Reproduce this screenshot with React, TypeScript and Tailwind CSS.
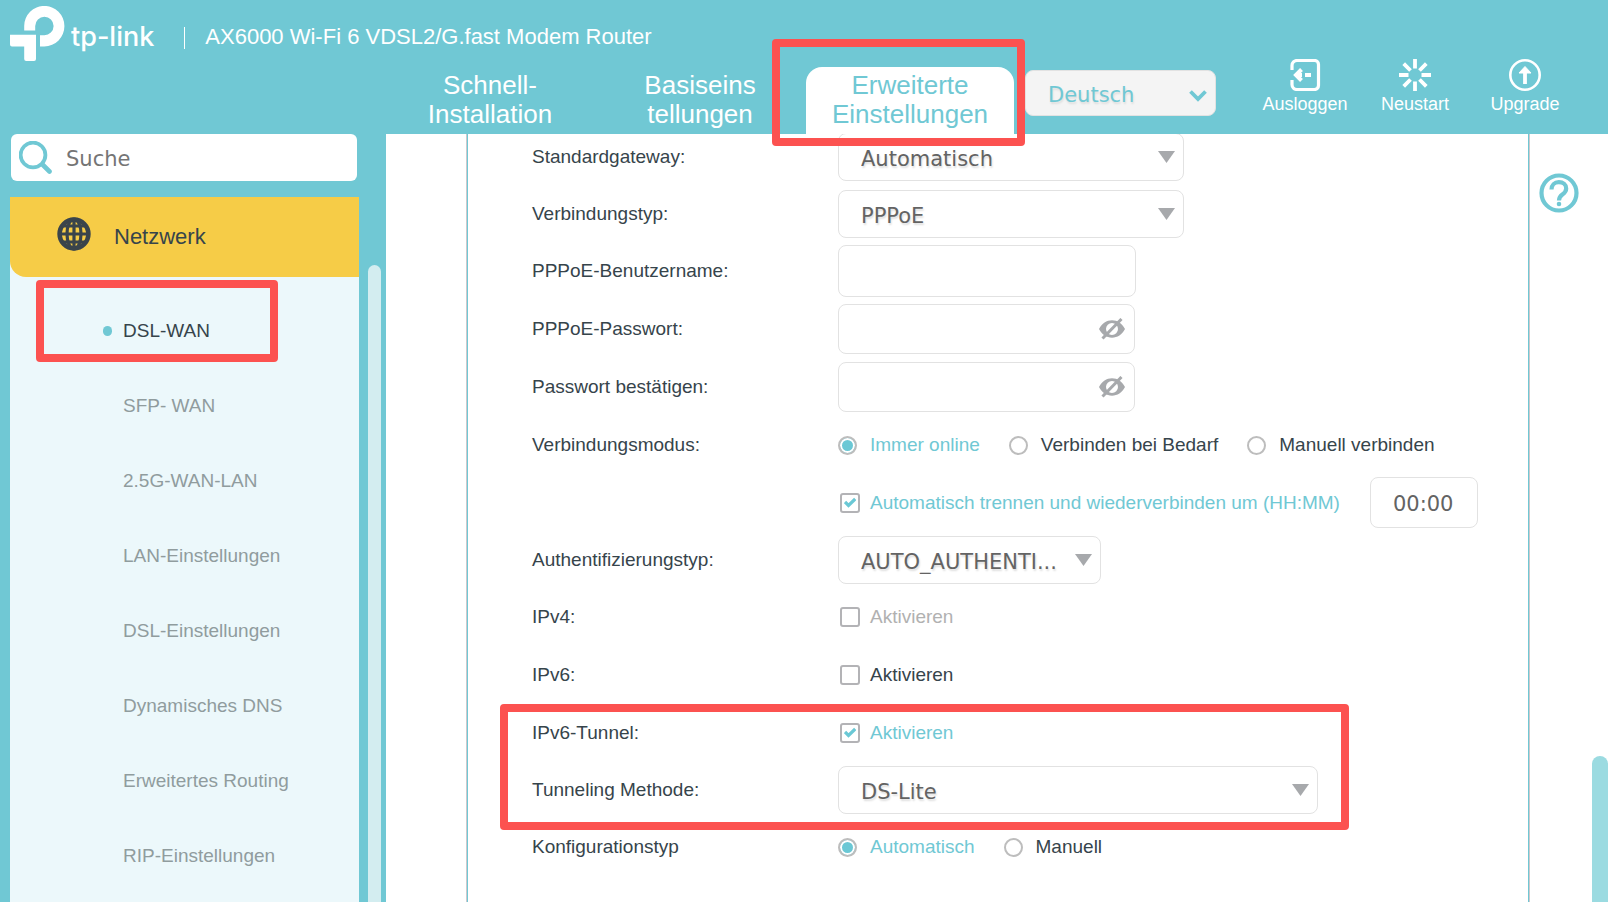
import { useState } from "react";
import type { ReactNode } from "react";

const menuItems = [
  "DSL-WAN",
  "SFP- WAN",
  "2.5G-WAN-LAN",
  "LAN-Einstellungen",
  "DSL-Einstellungen",
  "Dynamisches DNS",
  "Erweitertes Routing",
  "RIP-Einstellungen",
];

const tabs = [
  { id: "quick", lines: ["Schnell-", "Installation"] },
  { id: "basic", lines: ["Basiseins", "tellungen"] },
  { id: "advanced", lines: ["Erweiterte", "Einstellungen"] },
];

function Highlight({ className }: { className: string }) {
  return (
    <div
      aria-hidden="true"
      className={`absolute border-8 border-[#fc5250] rounded-[4px] pointer-events-none z-20 ${className}`}
    />
  );
}

function Logo() {
  return (
    <div className="flex items-start text-white">
      <svg width="55" height="55" viewBox="0 0 55 55" fill="currentColor" aria-hidden="true">
        <path d="M14.2 24.6V20a20.1 20.1 0 0 1 40.2 0 20.2 20.2 0 0 1-20.1 20.4H30V29.2h4.3a9.2 9.2 0 1 0-9.1-9.2v4.6z" />
        <path d="M0 28.8h26V53a2 2 0 0 1-2 2h-7.800a2 2 0 0 1-2-2V40.600H2a2 2 0 0 1-2-2z" />
      </svg>
      <span className="ml-1.5 mt-3 font-['Inter',sans-serif] font-medium text-[27px] leading-[38px]">
        tp-link
      </span>
    </div>
  );
}

function LogoutIcon() {
  return (
    <svg width="32" height="32" viewBox="0 0 32 32" fill="none" stroke="currentColor" strokeWidth="3.200" aria-hidden="true">
      <path d="M3 11V6.500a5 5 0 0 1 5-5h17.500a4 4 0 0 1 4 4v21a4 4 0 0 1-4 4H8a5 5 0 0 1-5-5V21" />
      <path d="M12.500 10.500 7 16l5.500 5.500M7 16h6M16 16h6" strokeWidth="4" />
    </svg>
  );
}

function RebootIcon() {
  return (
    <svg width="32" height="32" viewBox="0 0 32 32" fill="none" stroke="currentColor" strokeWidth="3.800" aria-hidden="true">
      <path d="M16 0v9.500M16 22.500V32M0 16h9.500M22.500 16H32M4.700 4.700l6.800 6.800M20.500 20.500l6.800 6.800M4.700 27.300l6.800-6.800M20.500 11.500l6.800-6.800" />
    </svg>
  );
}

function UpgradeIcon() {
  return (
    <svg width="32" height="32" viewBox="0 0 32 32" fill="none" stroke="currentColor" aria-hidden="true">
      <circle cx="16" cy="16" r="14.700" strokeWidth="2.600" />
      <path d="M16 25V10" strokeWidth="3.800" />
      <path d="M16 7.500l6 6.500H10z" fill="currentColor" strokeWidth="1" />
    </svg>
  );
}

function SearchIcon() {
  return (
    <svg width="33" height="33" viewBox="0 0 33 33" fill="none" stroke="#70c8d4" strokeLinecap="round" aria-hidden="true">
      <circle cx="14" cy="14" r="12.400" strokeWidth="3.800" />
      <path d="M23.500 23.500l7 7" strokeWidth="4.600" />
    </svg>
  );
}

function GlobeIcon() {
  return (
    <svg width="34" height="34" viewBox="0 0 34 34" fill="none" stroke="#3a444b" strokeWidth="3.200" aria-hidden="true">
      <circle cx="17" cy="17" r="14.400" strokeWidth="4.600" />
      <ellipse cx="17" cy="17" rx="7" ry="15" />
      <path d="M17 2v30M2 17h30M4 9h26M4 25h26" />
    </svg>
  );
}

function HelpIcon() {
  return (
    <svg width="40" height="40" viewBox="0 0 40 40" fill="none" stroke="#70c8d4" aria-hidden="true">
      <circle cx="20" cy="20" r="17.500" strokeWidth="4.200" />
      <path d="M12.500 16.500c0-4.500 3-7.300 7.300-7.300s7.400 2.500 7.400 6.300c0 3-1.700 4.500-3.800 6-2.300 1.600-3.400 2.600-3.400 6" strokeWidth="4.200" />
      <circle cx="20" cy="31" r="1.300" fill="#70c8d4" strokeWidth="2" />
    </svg>
  );
}

function EyeOffIcon() {
  return (
    <svg width="26" height="22" viewBox="0 0 26 22" fill="none" aria-hidden="true">
      <path
        fillRule="evenodd"
        fill="#a7a9ac"
        d="M0 11C3 5.500 7.500 2.300 13 2.300S23 5.500 26 11c-3 5.500-7.500 8.700-13 8.700S3 16.500 0 11zm13-6a6 6 0 1 0 0 12 6 6 0 0 0 0-12z"
      />
      <path d="M3.500 20.500 22.500 1" stroke="#a7a9ac" strokeWidth="3" />
    </svg>
  );
}

interface RowProps {
  label?: string;
  htmlFor?: string;
  className?: string;
  children: ReactNode;
}

function Row({ label, htmlFor, className = "h-[58px]", children }: RowProps) {
  return (
    <div className={`flex items-center ${className}`}>
      <div className="w-[306px] shrink-0">
        {htmlFor ? <label htmlFor={htmlFor}>{label}</label> : <span>{label}</span>}
      </div>
      {children}
    </div>
  );
}

interface SelectProps {
  id: string;
  value: string;
  width: string;
}

function Select({ id, value, width }: SelectProps) {
  return (
    <div className={`relative ${width}`}>
      <select
        id={id}
        defaultValue={value}
        className="w-full h-12 appearance-none rounded-lg border border-[#e2e2e2] bg-white pl-[22px] pt-[5px] pr-8 font-['DejaVu_Sans',sans-serif] text-[21px] text-[#636363] [text-shadow:1px_2px_2px_#ddd] focus:outline-none"
      >
        <option value={value}>{value}</option>
      </select>
      <svg
        className="absolute right-[9px] top-[18px] pointer-events-none"
        width="17"
        height="12"
        viewBox="0 0 17 12"
        fill="#a7a9ac"
        aria-hidden="true"
      >
        <path d="M0 0h17L8.500 12z" />
      </svg>
    </div>
  );
}

function PasswordField({ id }: { id: string }) {
  const [visible, setVisible] = useState(false);
  return (
    <div className="relative w-[297px]">
      <input
        id={id}
        type={visible ? "text" : "password"}
        className="w-full h-[50px] rounded-lg border border-[#e2e2e2] pl-[23px] pr-11 font-['DejaVu_Sans',sans-serif] text-[21px] text-[#636363] focus:outline-none"
      />
      <button
        type="button"
        aria-label="Passwort anzeigen"
        className="absolute right-2.5 top-3.5"
        onClick={() => setVisible(!visible)}
      >
        <EyeOffIcon />
      </button>
    </div>
  );
}

interface RadioGroupProps {
  name: string;
  options: string[];
}

function RadioGroup({ name, options }: RadioGroupProps) {
  const [selected, setSelected] = useState(options[0]);
  return (
    <div role="radiogroup" aria-label={name} className="flex items-center gap-[29px]">
      {options.map((option) => (
        <label
          key={option}
          className={`flex items-center gap-[13px] ${selected === option ? "text-[#70c8d4]" : "text-[#36444b]"}`}
        >
          <input
            type="radio"
            name={name}
            checked={selected === option}
            onChange={() => setSelected(option)}
            className="w-[19px] h-[19px] appearance-none rounded-full border-2 border-[#bdbdbd] checked:bg-[#6ac8d5] checked:shadow-[inset_0_0_0_2px_#fff]"
          />
          {option}
        </label>
      ))}
    </div>
  );
}

interface CheckboxProps {
  label: string;
  defaultChecked?: boolean;
  disabled?: boolean;
}

function Checkbox({ label, defaultChecked = false, disabled }: CheckboxProps) {
  const [checked, setChecked] = useState(defaultChecked);
  const color = disabled ? "text-[#b1b1b1]" : checked ? "text-[#70c8d4]" : "text-[#36444b]";
  return (
    <label className={`flex items-center gap-2.5 pl-0.5 ${color}`}>
      <span className="relative flex">
        <input
          type="checkbox"
          checked={checked}
          disabled={disabled}
          onChange={() => setChecked(!checked)}
          className="w-5 h-5 appearance-none rounded-[3px] border-2 border-[#b3b3b6] bg-white"
        />
        {checked && (
          <svg
            className="absolute left-1 top-1 pointer-events-none"
            width="12"
            height="12"
            viewBox="0 0 12 12"
            fill="none"
            stroke="#6ac8d5"
            strokeWidth="3.200"
            aria-hidden="true"
          >
            <path d="M1 5l3.500 3.500L11.200 2" />
          </svg>
        )}
      </span>
      {label}
    </label>
  );
}

function Header() {
  return (
    <header className="relative z-10 bg-[#70c8d4] text-white">
      <div className="flex h-[59px] pl-2.5 pt-1.5">
        <Logo />
        <div className="ml-[30px] mt-[21px] h-[22px] w-px bg-white" />
        <h1 className="ml-5 mt-4 text-[22px] leading-[30px]">AX6000 Wi-Fi 6 VDSL2/G.fast Modem Router</h1>
      </div>
      <div className="flex h-[75px] pl-[386px] pr-[28px]">
        <nav className="flex gap-0.5 pt-2">
          {tabs.map((tab) => (
            <div key={tab.id} className="relative">
              <a
                href={`#${tab.id}`}
                className={`block w-[208px] h-full rounded-t-2xl pt-1 text-center text-[26px] leading-[29px] ${
                  tab.id === "advanced" ? "bg-white text-[#70c8d4]" : ""
                }`}
              >
                {tab.lines[0]}
                <br />
                {tab.lines[1]}
              </a>
              {tab.id === "advanced" && <Highlight className="-left-[34px] -right-[11px] -top-7 -bottom-3" />}
            </div>
          ))}
        </nav>
        <div className="relative ml-[11px] mt-[11px] h-[46px] w-[191px]">
          <select
            aria-label="Sprache"
            className="w-full h-full appearance-none rounded-lg border border-[#e2e2e2] bg-[#f4f4f4] pl-[22px] pt-1 font-['DejaVu_Sans',sans-serif] text-[21px] text-[#70c8d4] [text-shadow:1px_2px_2px_#ddd] focus:outline-none"
          >
            <option>Deutsch</option>
          </select>
          <svg
            className="absolute right-[9px] top-5 pointer-events-none"
            width="18"
            height="12"
            viewBox="0 0 18 12"
            fill="none"
            stroke="#70c8d4"
            strokeWidth="3.800"
            aria-hidden="true"
          >
            <path d="M1.500 1.500 9 9l7.500-7.500" />
          </svg>
        </div>
        <div className="ml-auto flex text-[18px] leading-[26px]">
          <button type="button" className="flex w-[110px] flex-col items-center">
            <LogoutIcon />
            Ausloggen
          </button>
          <button type="button" className="flex w-[110px] flex-col items-center">
            <RebootIcon />
            Neustart
          </button>
          <button type="button" className="flex w-[110px] flex-col items-center">
            <UpgradeIcon />
            Upgrade
          </button>
        </div>
      </div>
    </header>
  );
}

function Sidebar() {
  return (
    <aside className="flex w-[386px] shrink-0 flex-col bg-[#70c8d4] pl-2.5">
      <div className="ml-px flex h-[47px] w-[346px] items-center rounded-md bg-white pl-2">
        <SearchIcon />
        <input
          type="search"
          aria-label="Suche"
          placeholder="Suche"
          className="ml-3.5 mt-[3px] w-[240px] font-['DejaVu_Sans',sans-serif] text-[21px] text-[#636363] placeholder:text-[#757575] focus:outline-none"
        />
      </div>
      <div className="mt-4 flex flex-1">
        <div className="flex w-[349px] flex-col bg-[#ecf8fb]">
          <div className="bg-[linear-gradient(to_bottom,#70c8d4_80%,#ecf8fb_80%)]">
            <a
              href="#network"
              className="flex h-20 items-center rounded-bl-2xl bg-[#f6cc47] pl-[47px] text-[22px] text-[#36444b]"
            >
              <span className="mb-1.5 mr-[23px]">
                <GlobeIcon />
              </span>
              Netzwerk
            </a>
          </div>
          <ul className="pt-4">
            {menuItems.map((item, index) => (
              <li key={item} className="relative">
                <a
                  href="#network"
                  className={`flex h-[75px] items-center ${index === 0 ? "pl-[93px] text-[#36444b]" : "pl-[113px] text-[#909c9e]"}`}
                >
                  {index === 0 && <span className="mr-[11px] h-[10px] w-[9px] rounded-full bg-[#70c8d4]" />}
                  {item}
                </a>
                {index === 0 && <Highlight className="left-[26px] w-[242px] -top-[13px] bottom-[6px]" />}
              </li>
            ))}
          </ul>
        </div>
        <div className="ml-[9px] mt-[68px] w-[13px] rounded-t-full bg-[#d3edf0]" />
      </div>
    </aside>
  );
}

function WanForm() {
  return (
    <form className="-mt-1.5 pl-16 text-[#36444b]">
      <Row label="Standardgateway:" htmlFor="gateway" className="h-[57px]">
        <Select id="gateway" value="Automatisch" width="w-[346px]" />
      </Row>
      <Row label="Verbindungstyp:" htmlFor="connection-type" className="h-[57px]">
        <Select id="connection-type" value="PPPoE" width="w-[346px]" />
      </Row>
      <Row label="PPPoE-Benutzername:" htmlFor="username">
        <input
          id="username"
          type="text"
          className="w-[298px] h-[52px] rounded-lg border border-[#e2e2e2] px-[23px] font-['DejaVu_Sans',sans-serif] text-[21px] text-[#636363] focus:outline-none"
        />
      </Row>
      <Row label="PPPoE-Passwort:" htmlFor="password">
        <PasswordField id="password" />
      </Row>
      <Row label="Passwort bestätigen:" htmlFor="password-confirm">
        <PasswordField id="password-confirm" />
      </Row>
      <Row label="Verbindungsmodus:">
        <RadioGroup name="Verbindungsmodus" options={["Immer online", "Verbinden bei Bedarf", "Manuell verbinden"]} />
      </Row>
      <Row className="h-[57px]">
        <Checkbox label="Automatisch trennen und wiederverbinden um (HH:MM)" defaultChecked />
        <input
          type="text"
          aria-label="Uhrzeit"
          defaultValue="00:00"
          className="ml-[30px] w-[108px] h-[51px] rounded-lg border border-[#e2e2e2] pl-[22px] pt-0.5 font-['DejaVu_Sans',sans-serif] text-[21px] text-[#636363] focus:outline-none"
        />
      </Row>
      <Row label="Authentifizierungstyp:" htmlFor="auth-type" className="h-[57px]">
        <Select id="auth-type" value="AUTO_AUTHENTI..." width="w-[263px]" />
      </Row>
      <Row label="IPv4:">
        <Checkbox label="Aktivieren" disabled />
      </Row>
      <Row label="IPv6:">
        <Checkbox label="Aktivieren" />
      </Row>
      <div className="relative">
        <Row label="IPv6-Tunnel:" className="h-[57px]">
          <Checkbox label="Aktivieren" defaultChecked />
        </Row>
        <Row label="Tunneling Methode:" htmlFor="tunnel" className="h-[57px]">
          <Select id="tunnel" value="DS-Lite" width="w-[480px]" />
        </Row>
        <Highlight className="-left-8 w-[849px] top-0 -bottom-3" />
      </div>
      <Row label="Konfigurationstyp">
        <RadioGroup name="Konfigurationstyp" options={["Automatisch", "Manuell"]} />
      </Row>
    </form>
  );
}

export default function App() {
  return (
    <div className="flex min-h-screen flex-col bg-white font-['Liberation_Sans',Arial,sans-serif] text-[19px] leading-6">
      <Header />
      <div className="flex flex-1">
        <Sidebar />
        <main className="flex flex-1 pl-20">
          <div className="flex flex-1 border-x border-[#d0c8cc]">
            <div className="flex-1 border-x border-[#70c8d4]">
              <WanForm />
            </div>
          </div>
          <div className="flex w-[78px] justify-between">
            <button type="button" aria-label="Hilfe" className="ml-[9px] mt-[39px] self-start">
              <HelpIcon />
            </button>
            <div className="mt-[622px] w-4 rounded-t-full bg-[#9bdbe1]" />
          </div>
        </main>
      </div>
    </div>
  );
}
